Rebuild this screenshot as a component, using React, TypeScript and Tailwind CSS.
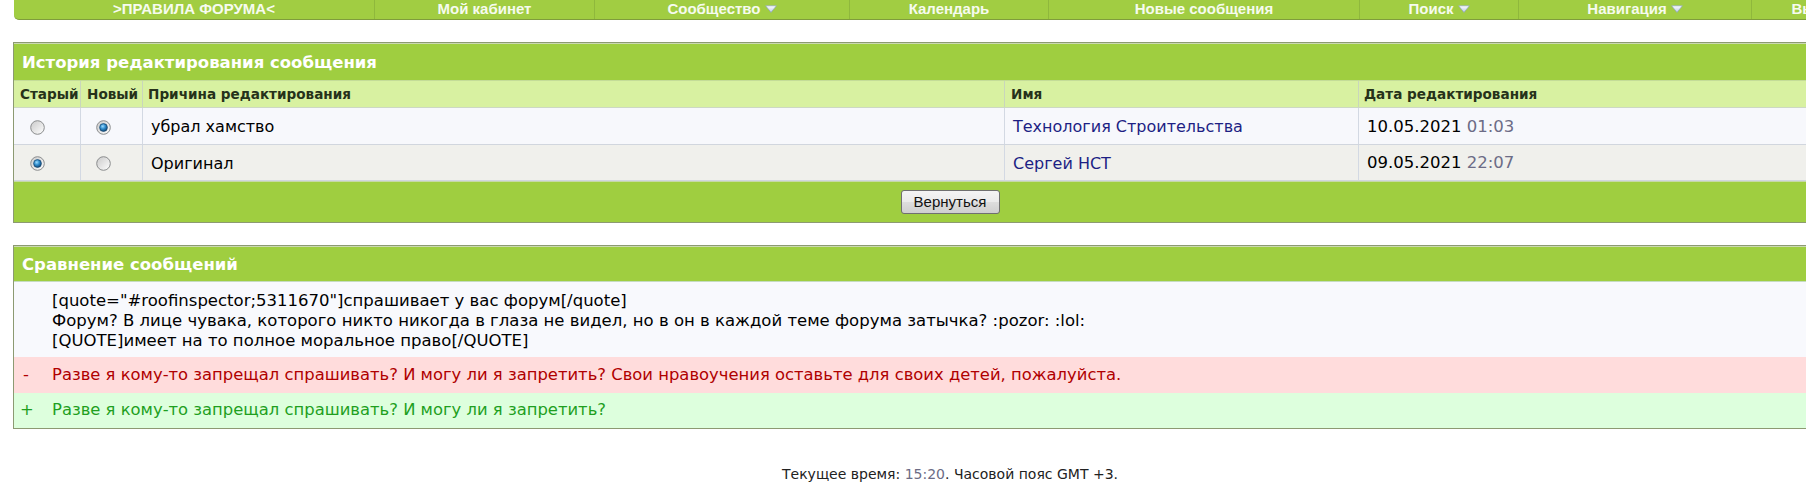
import React, { useId } from "react";

function Radio({ checked }: { checked?: boolean }) {
  const id = useId().replace(/[^a-zA-Z0-9]/g, "");
  return (
    <svg width="15" height="15" viewBox="0 0 15 15" className="block">
      <defs>
        <linearGradient id={`g${id}`} x1="0" y1="0" x2="1" y2="1">
          <stop offset="0" stopColor="#c9c9c9" />
          <stop offset="1" stopColor="#ffffff" />
        </linearGradient>
        <radialGradient id={`b${id}`} cx="0.4" cy="0.35" r="0.75">
          <stop offset="0" stopColor="#9bdcff" />
          <stop offset="0.45" stopColor="#2f8ccc" />
          <stop offset="1" stopColor="#0a3760" />
        </radialGradient>
      </defs>
      <circle cx="7.5" cy="7.5" r="6.8" fill={`url(#g${id})`} stroke="#8a8c8d" strokeWidth="1" />
      {checked && (
        <circle cx="7.5" cy="7.5" r="3.9" fill={`url(#b${id})`} stroke="#15456d" strokeWidth="0.7" />
      )}
    </svg>
  );
}

function NavArrow() {
  const id = useId().replace(/[^a-zA-Z0-9]/g, "");
  return (
    <svg width="12" height="8" viewBox="0 0 12 8" className="inline-block ml-[4px] mt-[2px]">
      <defs>
        <linearGradient id={`a${id}`} x1="0" y1="0" x2="0" y2="1">
          <stop offset="0" stopColor="#ffffff" />
          <stop offset="1" stopColor="#b9c9e2" />
        </linearGradient>
      </defs>
      <path d="M0.6 0.8 H11.4 L6 7.4 Z" fill={`url(#a${id})`} stroke="#8ea3c2" strokeWidth="0.7" strokeLinejoin="round" />
    </svg>
  );
}

const navItems: { label: string; w: string; arrow?: boolean }[] = [
  { label: ">ПРАВИЛА ФОРУМА<", w: "w-[360px]" },
  { label: "Мой кабинет", w: "w-[220px]" },
  { label: "Сообщество", w: "w-[255px]", arrow: true },
  { label: "Календарь", w: "w-[199px]" },
  { label: "Новые сообщения", w: "w-[311px]" },
  { label: "Поиск", w: "w-[159px]", arrow: true },
  { label: "Навигация", w: "w-[233px]", arrow: true },
  { label: "Выход", w: "w-[130px]" },
];

const verdana = "font-['DejaVu_Sans',Verdana,sans-serif]";
const tahoma = "font-['Liberation_Sans',Tahoma,Arial,sans-serif]";

export default function App() {
  return (
    <div className="w-[1806px] h-[499px] overflow-hidden bg-white">
      <div className="w-[1900px] px-[13px]">
        {/* Navbar */}
        <div className={`ml-px flex h-[20px] bg-[#a1cd42] border-b border-[#7f9c3c] rounded-bl-[5px] ${tahoma}`}>
          {navItems.map((it, i) => (
            <div
              key={it.label}
              className={`${it.w} shrink-0 flex items-center justify-center pb-[3px] text-[15px] font-bold text-[#f6fbef] leading-none ${
                i > 0 ? "border-l border-[#8fb83c]" : ""
              }`}
            >
              <span>{it.label}</span>
              {it.arrow && <NavArrow />}
            </div>
          ))}
        </div>

        {/* Edit history box */}
        <div className="mt-[22px] border border-[#8c9a72]">
          <div className={`h-[37px] border-t border-[#cbd9b2] bg-[#9fce40] flex items-center pl-[8px] pt-[2px] text-white font-bold text-[16.5px] ${verdana}`}>
            История редактирования сообщения
          </div>
          <div className={`grid grid-cols-[66px_62px_862px_354px_1fr] h-[28px] bg-[#d8f1a1] border-t border-[#c4dc98] border-b border-b-[#cdd8c4] text-[13.6px] font-bold text-[#26321a] ${verdana}`}>
            <div className="flex items-center pl-[6px]">Старый</div>
            <div className="flex items-center pl-[6px] border-l border-[#c9d6bc]">Новый</div>
            <div className="flex items-center pl-[5px] border-l border-[#c9d6bc]">Причина редактирования</div>
            <div className="flex items-center pl-[6px] border-l border-[#c9d6bc]">Имя</div>
            <div className="flex items-center pl-[5px] border-l border-[#c9d6bc]">Дата редактирования</div>
          </div>
          {[
            { a: false, b: true, reason: "убрал хамство", name: "Технология Строительства", date: "10.05.2021", time: "01:03", bg: "bg-[#f7f8fc]", h: "h-[36px]", extra: "" },
            { a: true, b: false, reason: "Оригинал", name: "Сергей НСТ", date: "09.05.2021", time: "22:07", bg: "bg-[#f0f0ec]", h: "h-[37px]", extra: "border-t border-b border-[#d1d6de]" },
          ].map((r, i) => (
            <div
              key={i}
              className={`grid grid-cols-[66px_62px_862px_354px_1fr] ${r.h} ${r.bg} ${r.extra} text-[16px] text-black ${verdana}`}
            >
              <div className="flex items-center pl-[16px] pt-[2px]"><Radio checked={r.a} /></div>
              <div className="flex items-center pl-[15px] pt-[2px] border-l border-[#d3d9e3]"><Radio checked={r.b} /></div>
              <div className="flex items-center pl-[8px] pt-[2px] border-l border-[#d3d9e3]">{r.reason}</div>
              <div className="flex items-center pl-[8px] pt-[2px] border-l border-[#d3d9e3] text-[#1d1f84]">{r.name}</div>
              <div className="flex items-center pl-[8px] pt-[2px] border-l border-[#d3d9e3] text-[16.5px]">
                {r.date}&nbsp;<span className="text-[#6c6c86]">{r.time}</span>
              </div>
            </div>
          ))}
          <div className="h-[41px] bg-[#9fce40] border-t border-[#c6d9a6] flex items-center justify-center">
            <button
              className={`h-[24px] w-[99px] rounded-[3px] border border-[#707070] bg-[linear-gradient(#f4f4f4_0%,#ebebeb_48%,#dddddd_52%,#cfcfcf_100%)] text-[15px] text-[#111] ${tahoma}`}
            >
              Вернуться
            </button>
          </div>
        </div>

        {/* Compare box */}
        <div className="mt-[22px] border border-[#8c9a72]">
          <div className={`h-[36px] border-t border-[#cbd9b2] bg-[#9fce40] border-b border-b-[#c5dcc0] flex items-center pl-[8px] pt-[2px] text-white font-bold text-[16.5px] ${verdana}`}>
            Сравнение сообщений
          </div>
          <div className={`bg-[#f8f9fd] h-[75px] pt-[9px] pl-[38px] text-[16.5px] leading-[20px] text-black ${verdana}`}>
            <div>[quote="#roofinspector;5311670"]спрашивает у вас форум[/quote]</div>
            <div>Форум? В лице чувака, которого никто никогда в глаза не видел, но в он в каждой теме форума затычка? :pozor: :lol:</div>
            <div>[QUOTE]имеет на то полное моральное право[/QUOTE]</div>
          </div>
          <div className={`h-[36px] bg-[#ffdcdc] flex items-center text-[16.4px] text-[#b00000] ${verdana}`}>
            <span className="w-[38px] pl-[9px]">-</span>
            <span>Разве я кому-то запрещал спрашивать? И могу ли я запретить? Свои нравоучения оставьте для своих детей, пожалуйста.</span>
          </div>
          <div className={`h-[35px] bg-[#ddffdd] flex items-center text-[16.4px] text-[#1f9f1f] ${verdana}`}>
            <span className="w-[38px] pl-[6px]">+</span>
            <span>Разве я кому-то запрещал спрашивать? И могу ли я запретить?</span>
          </div>
        </div>

        {/* Footer */}
        <div className={`mt-[35px] text-center text-[14px] text-[#222] ${verdana}`}>
          Текущее время: <span className="text-[#6c6c86]">15:20</span>. Часовой пояс GMT +3.
        </div>
      </div>
    </div>
  );
}
